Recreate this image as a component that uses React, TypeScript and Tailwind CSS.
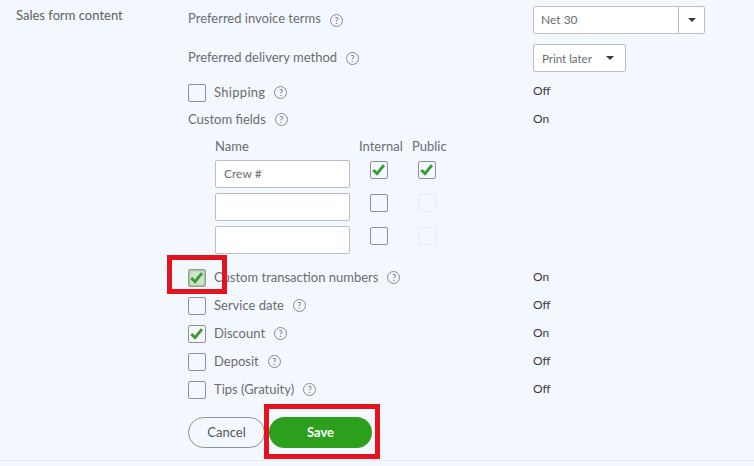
const font = { fontFamily: '"Lato", "Liberation Sans", sans-serif' };

const Help = () => (
    <span className="ml-[9px] flex h-[13px] w-[13px] shrink-0 items-center justify-center rounded-full border border-[#858b94] text-[9px] leading-none text-[#6b7178]">
        ?
    </span>
);

const Check = () => (
    <svg viewBox="0 0 18 18" className="h-full w-full">
        <path d="M2.6 9 L6.8 13.2 L14.6 3.6" fill="none" stroke="#3a9a32" strokeWidth="3.2" />
    </svg>
);

type BoxProps = {
    checked?: boolean;
    focused?: boolean;
    disabled?: boolean;
};

const Box = ({ checked, focused, disabled }: BoxProps) => {
    if (focused) {
        return (
            <span className="block h-[18px] w-[18px] shrink-0 rounded-[2px] border border-[#8d9a8c] bg-[#cfe3c9] shadow-[inset_0_0_2px_1px_#9fc497]">
                <Check />
            </span>
        );
    }
    return (
        <span
            className={`block h-[18px] w-[18px] shrink-0 rounded-[2px] border ${
                disabled ? 'border-[#e8ecf1]' : 'border-[#8d9096]'
            }`}
        >
            {checked && <Check />}
        </span>
    );
};

type RowProps = {
    label: string;
    status: string;
    checked?: boolean;
    focused?: boolean;
};

const OptionRow = ({ label, status, checked, focused }: RowProps) => (
    <div className="mt-[10px] grid h-[18px] grid-cols-[345px_1fr] items-center">
        <div className="flex items-center">
            <Box checked={checked} focused={focused} />
            <span className="ml-2 text-[#6b6c72]">{label}</span>
            <Help />
        </div>
        <span className="-translate-y-px text-xs text-[#393a3d]">{status}</span>
    </div>
);

const Caret = () => (
    <span className="block h-0 w-0 border-x-[4px] border-t-[4px] border-x-transparent border-t-[#393a3d]" />
);

const fields = [
    { name: 'Crew #', internal: true, isPublic: true },
    { name: '', internal: false, isPublic: false },
    { name: '', internal: false, isPublic: false },
];

export default function App() {
    return (
        <div
            className="relative flex h-[466px] w-[754px] flex-col overflow-hidden bg-[#f3f8fe] text-[13px] text-[#6b6c72]"
            style={font}
        >
            <div className="flex h-[461px] border-b border-[#e6e9ee]">
                <div className="w-[188px] pl-4 pt-[6px] leading-[18px] text-[#5d5e63]">
                    Sales form content
                </div>
                <div className="flex-1 pt-[6px]">
                    <div className="grid h-7 grid-cols-[345px_1fr] items-center">
                        <div className="flex items-center">
                            <span className="-translate-y-px">Preferred invoice terms</span>
                            <Help />
                        </div>
                        <div className="flex h-7 w-[172px] items-center justify-between rounded-[2px] border border-[#babec5] bg-white pl-[7px] text-xs">
                            Net 30
                            <span className="flex h-full w-[26px] items-center justify-center border-l border-[#babec5]">
                                <Caret />
                            </span>
                        </div>
                    </div>
                    <div className="mt-[10px] grid h-7 grid-cols-[345px_1fr] items-center">
                        <div className="flex items-center">
                            Preferred delivery method
                            <Help />
                        </div>
                        <div className="flex h-7 w-[93px] items-center justify-between rounded-[2px] border border-[#babec5] bg-white pl-2 pr-[11px] text-[11.5px]">
                            <span className="translate-y-px">Print later</span>
                            <Caret />
                        </div>
                    </div>
                    <div className="mt-[11px] grid h-[18px] grid-cols-[345px_1fr] items-center">
                        <div className="flex items-center">
                            <Box />
                            <span className="ml-2 tracking-[0.3px]">Shipping</span>
                            <Help />
                        </div>
                        <span className="-translate-y-0.5 text-xs text-[#393a3d]">Off</span>
                    </div>
                    <div className="mt-[9px] grid h-[18px] grid-cols-[345px_1fr] items-center">
                        <div className="flex items-center">
                            Custom fields
                            <Help />
                        </div>
                        <span className="-translate-y-px text-xs text-[#393a3d]">On</span>
                    </div>

                    <div className="ml-[27px] mt-[9px] w-[240px]">
                        <div className="grid h-[18px] grid-cols-[144px_53px_1fr] items-center">
                            <span>Name</span>
                            <span>Internal</span>
                            <span>Public</span>
                        </div>
                        <div className="mt-[5px] flex flex-col gap-[5px]">
                            {fields.map((field, index) => (
                                <div className="flex items-start" key={index}>
                                    <div className="flex h-7 w-[135px] items-center rounded-[2px] border border-[#babec5] bg-white pl-2 text-xs">
                                        {field.name}
                                    </div>
                                    <div className="ml-5 mt-px">
                                        <Box checked={field.internal} />
                                    </div>
                                    <div className="ml-[30px] mt-px">
                                        <Box checked={field.isPublic} disabled={!field.isPublic} />
                                    </div>
                                </div>
                            ))}
                        </div>
                    </div>

                    <div className="mt-[14px]">
                        <OptionRow label="Custom transaction numbers" status="On" checked focused />
                        <OptionRow label="Service date" status="Off" />
                        <OptionRow label="Discount" status="On" checked />
                        <OptionRow label="Deposit" status="Off" />
                        <OptionRow label="Tips (Gratuity)" status="Off" />
                    </div>

                    <div className="mt-[19px] flex gap-1">
                        <button className="h-[31px] w-[77px] rounded-full border border-[#8d9096] text-[13px] text-[#55565b]">
                            Cancel
                        </button>
                        <button className="h-[31px] w-[103px] rounded-full bg-[#2ca01c] text-[13px] font-bold text-white">
                            Save
                        </button>
                    </div>
                </div>
            </div>

            <div className="pointer-events-none absolute left-[167px] top-[255px] h-[39px] w-[60px] border-[5px] border-[#e3141f]" />
            <div className="pointer-events-none absolute left-[264px] top-[404px] h-[55px] w-[116px] border-[5px] border-[#e3141f]" />
        </div>
    );
}
